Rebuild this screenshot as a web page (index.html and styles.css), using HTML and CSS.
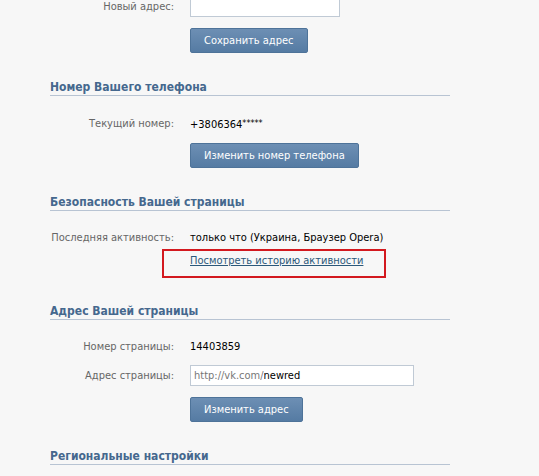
FILE: index.html
```html
<!DOCTYPE html>
<html lang="ru">
<head>
  <meta charset="UTF-8" />
  <title>Настройки</title>
  <link rel="stylesheet" href="styles.css">
</head>
<body>
  <div class="settings">
    <div class="block first">
      <div class="row">
        <div class="label">Новый адрес:</div>
        <input type="text" class="field narrow" />
      </div>
      <div class="row actions">
        <div class="label"></div>
        <button class="btn">Сохранить адрес</button>
      </div>
    </div>

    <div class="block">
      <h2 class="header">Номер Вашего телефона</h2>
      <div class="row">
        <div class="label">Текущий номер:</div>
        <div class="value">+3806364<span class="stars">*****</span></div>
      </div>
      <div class="row actions">
        <div class="label"></div>
        <button class="btn">Изменить номер телефона</button>
      </div>
    </div>

    <div class="block security">
      <h2 class="header">Безопасность Вашей страницы</h2>
      <div class="row">
        <div class="label">Последняя активность:</div>
        <div class="value">только что (Украина, Браузер Opera)</div>
      </div>
      <div class="row link-row">
        <div class="label"></div>
        <a href="#" class="link">Посмотреть историю активности</a>
        <div class="mark"></div>
      </div>
    </div>

    <div class="block">
      <h2 class="header">Адрес Вашей страницы</h2>
      <div class="row">
        <div class="label">Номер страницы:</div>
        <div class="value">14403859</div>
      </div>
      <div class="row field-row">
        <div class="label">Адрес страницы:</div>
        <label class="field wide">
          <span class="prefix">http://vk.com/</span><input type="text" value="newred" />
        </label>
      </div>
      <div class="row actions">
        <div class="label"></div>
        <button class="btn">Изменить адрес</button>
      </div>
    </div>

    <div class="block">
      <h2 class="header">Региональные настройки</h2>
    </div>
  </div>
</body>
</html>
```

FILE: styles.css
```css
body {
  margin: 0;
  background: #f7f7f7;
  font-family: "DejaVu Sans Condensed", Tahoma, sans-serif;
  font-size: 11px;
  color: #000;
}
.settings {
  width: 400px;
  margin-left: 50px;
  margin-top: -4px;
}
.block {
  margin-bottom: 26px;
}
.block.security {
  margin-bottom: 35px;
}
.header {
  margin: 0 0 20px;
  height: 16px;
  line-height: 16px;
  font-size: 12px;
  font-weight: bold;
  color: #45688e;
  border-bottom: 1px solid #b8c4d3;
}
.row {
  display: grid;
  grid-template-columns: 124px auto;
  column-gap: 16px;
  align-items: center;
  justify-items: start;
  line-height: 14px;
}
.label {
  justify-self: end;
  color: #666;
}
.value {
  color: #000;
}
.stars {
  font-size: 9px;
  vertical-align: 2px;
}
.actions {
  margin-top: 11px;
}
.field {
  height: 21px;
  box-sizing: border-box;
  border: 1px solid #c0cad5;
  background: #fff;
  font: inherit;
  padding: 0 3px;
}
.narrow {
  width: 150px;
}
.wide {
  display: flex;
  align-items: center;
  width: 224px;
}
.wide input {
  border: none;
  outline: none;
  padding: 0;
  font: inherit;
  color: #000;
  flex: 1;
  min-width: 0;
}
.prefix {
  color: #777;
}
.field-row {
  margin-top: 11px;
}
.btn {
  height: 25px;
  padding: 0 13px;
  font: inherit;
  font-size: 11px;
  color: #fff;
  background: linear-gradient(#6d8fb4, #557ba3);
  border: 1px solid #4e7399;
  border-radius: 2px;
  cursor: pointer;
}
.link-row {
  position: relative;
  margin-top: 9px;
}
.link {
  color: #2b587a;
  text-decoration: underline;
}
.mark {
  position: absolute;
  left: 112px;
  top: -5px;
  width: 220px;
  height: 25px;
  border: 2px solid #d3191f;
}
```
